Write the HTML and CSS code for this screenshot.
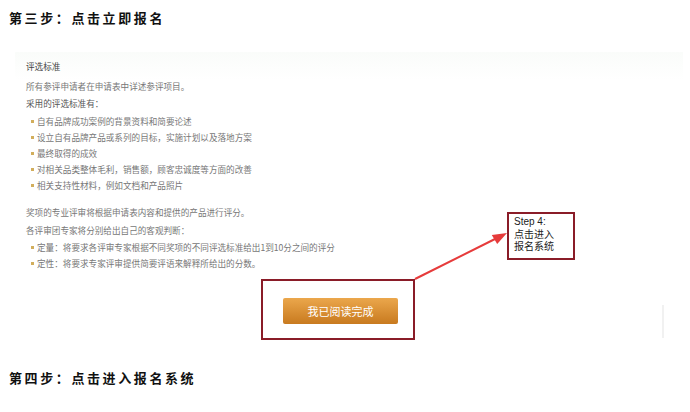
FILE: index.html
```html
<!DOCTYPE html>
<html lang="zh-CN">
<head>
    <meta charset="UTF-8">
    <meta name="viewport" content="width=device-width, initial-scale=1.0">
    <title>第三步：点击立即报名</title>
    <link rel="stylesheet" href="styles.css">
</head>
<body>
    <h2 class="step-title">第三步：点击立即报名</h2>
    <div class="panel">
        <h3 class="rules-title">评选标准</h3>
        <p>所有参评申请者在申请表中详述参评项目。</p>
        <p class="dark">采用的评选标准有：</p>
        <ul class="rules-list">
            <li>自有品牌成功案例的背景资料和简要论述</li>
            <li>设立自有品牌产品或系列的目标，实施计划以及落地方案</li>
            <li>最终取得的成效</li>
            <li>对相关品类整体毛利，销售额，顾客忠诚度等方面的改善</li>
            <li>相关支持性材料，例如文档和产品照片</li>
        </ul>
        <p class="gap">奖项的专业评审将根据申请表内容和提供的产品进行评分。</p>
        <p class="tight">各评审团专家将分别给出自己的客观判断：</p>
        <ul class="rules-list second">
            <li>定量：将要求各评审专家根据不同奖项的不同评选标准给出1到10分之间的评分</li>
            <li>定性：将要求专家评审提供简要评语来解释所给出的分数。</li>
        </ul>
        <div class="highlight">
            <button class="read-btn">我已阅读完成</button>
        </div>

        <!-- annotation over the screenshot -->
        <div class="callout">Step 4:<br>点击进入<br>报名系统</div>
        <svg class="arrow" width="100" height="56" viewBox="0 0 100 56">
            <line x1="5" y1="51" x2="85" y2="11" stroke="#e63b3b" stroke-width="2"/>
            <polygon points="97,5 87.2,16 81.8,7" fill="#e63b3b"/>
        </svg>
        <div class="scrollbar"></div>
    </div>
    <h2 class="step-title next">第四步：点击进入报名系统</h2>
</body>
</html>
```

FILE: styles.css
```css
body {
    margin: 0;
    background-color: #fff;
    font-family: "Noto Sans CJK SC", sans-serif;
    color: #777;
}
.step-title {
    margin: 8px 0 0;
    padding-left: 9px;
    font-size: 13px;
    line-height: 20px;
    letter-spacing: 2.6px;
    font-weight: 700;
    color: #111;
}
.step-title.next {
    margin-top: 18px;
}
.panel {
    position: relative;
    margin: 24px 7px 0 15px;
    padding: 6px 0 10px 11px;
    background: linear-gradient(#fafcfa, #fff 28px);
}
.panel p {
    margin: 0;
    font-size: 8.6px;
    line-height: 17px;
}
.rules-title {
    margin: 0 0 3.5px;
    font-size: 8.6px;
    line-height: 16px;
    font-weight: 400;
    color: #444;
}
.panel p.dark {
    color: #555;
}
.rules-list {
    list-style: none;
    margin: 1.5px 0 0;
    padding: 0 0 0 11px;
}
.rules-list li {
    position: relative;
    font-size: 8.6px;
    line-height: 16px;
}
.rules-list li::before {
    content: "";
    position: absolute;
    left: -6px;
    top: 7px;
    width: 2.5px;
    height: 2.5px;
    background-color: #d2ae5c;
}
.rules-list.second {
    margin-top: 0.5px;
}
.panel p.gap {
    margin-top: 10.5px;
}
.panel p.tight {
    margin-top: 1px;
}
.highlight {
    width: fit-content;
    margin: 8px 0 0 235px;
    padding: 17px 15px 14px 20px;
    border: 2px solid #8a1c28;
}
.read-btn {
    display: block;
    width: 115px;
    height: 26px;
    border: none;
    border-radius: 2px;
    background: linear-gradient(#eba74c, #c87a1f);
    color: #fff;
    font-family: "Noto Sans CJK SC", sans-serif;
    font-size: 11px;
    cursor: pointer;
}
.callout {
    position: absolute;
    left: 492px;
    top: 160px;
    box-sizing: border-box;
    width: 68px;
    height: 48px;
    padding: 2px 5px;
    border: 2px solid #8a1c28;
    background-color: #fff;
    font-family: "Liberation Sans", "Noto Sans CJK SC", sans-serif;
    font-size: 10px;
    line-height: 12.5px;
    color: #222;
}
.arrow {
    position: absolute;
    left: 395px;
    top: 176px;
}
.scrollbar {
    position: absolute;
    left: 647px;
    top: 253px;
    width: 2px;
    height: 33px;
    background-color: #f1f1f1;
}
```
